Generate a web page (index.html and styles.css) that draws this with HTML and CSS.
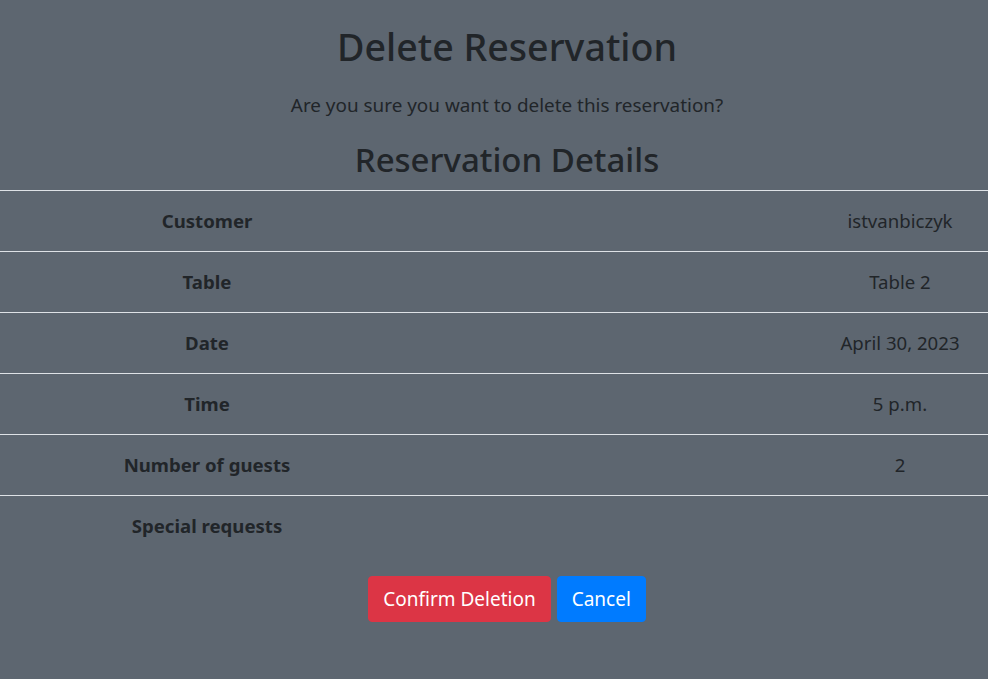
FILE: index.html
```html
<!DOCTYPE html>
<html lang="en">
<head>
<meta charset="utf-8">
<title>Delete Reservation</title>
<link rel="stylesheet" href="styles.css">
</head>
<body>
<main class="page">
  <h1 class="title">Delete Reservation</h1>
  <p class="lead">Are you sure you want to delete this reservation?</p>
  <h2 class="subtitle">Reservation Details</h2>
  <div class="details">
    <div class="row"><div class="label">Customer</div><div class="spacer"></div><div class="value">istvanbiczyk</div></div>
    <div class="row"><div class="label">Table</div><div class="spacer"></div><div class="value">Table 2</div></div>
    <div class="row"><div class="label">Date</div><div class="spacer"></div><div class="value">April 30, 2023</div></div>
    <div class="row"><div class="label">Time</div><div class="spacer"></div><div class="value">5 p.m.</div></div>
    <div class="row"><div class="label">Number of guests</div><div class="spacer"></div><div class="value">2</div></div>
    <div class="row last"><div class="label">Special requests</div><div class="spacer"></div><div class="value"></div></div>
  </div>
  <div class="actions">
    <button class="btn btn-danger" type="button">Confirm Deletion</button>
    <button class="btn btn-primary" type="button">Cancel</button>
  </div>
</main>
</body>
</html>
```
FILE: styles.css
```css
html, body {
  margin: 0;
  padding: 0;
}
body {
  background: #5d6670;
  color: #212529;
  font-family: "Noto Sans", "Open Sans", sans-serif;
  font-size: 16px;
  line-height: 1.5;
  height: 679px;
  overflow: hidden;
}
.page {
  display: flex;
  flex-direction: column;
  align-items: stretch;
  text-align: center;
}
.title,
.lead,
.subtitle,
.actions {
  padding-left: 26px;
}
.title {
  margin: 23px 0 0;
  font-size: 37.6px;
  font-weight: 500;
  line-height: 48px;
}
.lead {
  margin: 19px 0 0;
  font-size: 18.9px;
  font-weight: 400;
  line-height: 30px;
}
.subtitle {
  margin: 21px 0 0;
  font-size: 33px;
  font-weight: 500;
  line-height: 38px;
}
.details {
  margin-top: 11px;
  border-top: 1px solid #dee2e6;
  font-size: 18.6px;
}
.row {
  display: grid;
  grid-template-columns: 414px 1fr 176px;
  align-items: center;
  height: 60px;
  border-bottom: 1px solid #dee2e6;
}
.row.last {
  border-bottom: none;
}
.label {
  font-weight: 700;
}
.value {
  font-weight: 400;
}
.actions {
  display: flex;
  justify-content: center;
  gap: 6px;
  margin-top: 20px;
}
.btn {
  font-family: inherit;
  font-size: 19px;
  line-height: 28px;
  height: 46px;
  padding: 8px 14px;
  border: 1px solid transparent;
  border-radius: 4px;
  color: #fff;
  cursor: pointer;
}
.btn-danger {
  background: #dc3545;
  border-color: #dc3545;
}
.btn-primary {
  background: #007bff;
  border-color: #007bff;
}
```
